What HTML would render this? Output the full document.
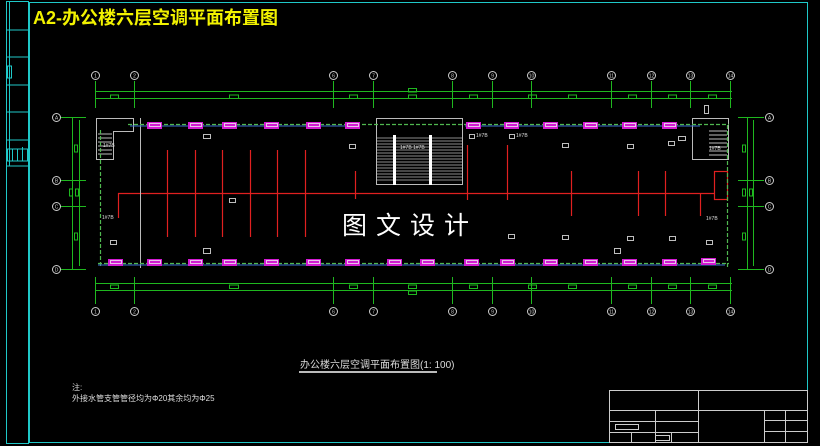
<!DOCTYPE html>
<html><head><meta charset="utf-8"><style>
html,body{margin:0;padding:0;background:#000;width:820px;height:446px;overflow:hidden}
svg{display:block}
text{font-family:"Liberation Sans","Noto Sans CJK SC",sans-serif}
</style></head><body>
<svg width="820" height="446" viewBox="0 0 820 446" xmlns="http://www.w3.org/2000/svg">
<rect width="820" height="446" fill="#000"/>
<g stroke="#1fc8c8" stroke-width="1" fill="none">
<rect x="6.5" y="1.5" width="22" height="442"/>
<line x1="9.5" y1="2" x2="9.5" y2="166"/>
<line x1="6" y1="30" x2="28" y2="30"/><line x1="6" y1="57" x2="28" y2="57"/>
<line x1="6" y1="85" x2="28" y2="85"/><line x1="6" y1="112" x2="28" y2="112"/>
<line x1="6" y1="140" x2="28" y2="140"/><line x1="6" y1="166" x2="28" y2="166"/>
<rect x="7.5" y="66" width="4" height="12"/>
<rect x="7.5" y="149" width="20" height="12"/>
<line x1="12.5" y1="149" x2="12.5" y2="161"/><line x1="17.5" y1="149" x2="17.5" y2="161"/><line x1="22.5" y1="147" x2="22.5" y2="161"/>
<rect x="29.5" y="2.5" width="778" height="440"/>
</g>
<text x="33" y="24" fill="#f2f200" font-size="18" font-weight="bold" font-family="'Liberation Serif','Noto Serif CJK SC',serif">A2-办公楼六层空调平面布置图</text>

<g stroke="#1fb81f" stroke-width="1" fill="none">
<line x1="96" y1="91.5" x2="732" y2="91.5"/><line x1="96" y1="98.5" x2="732" y2="98.5"/>
<line x1="96" y1="283.5" x2="732" y2="283.5"/><line x1="96" y1="290.5" x2="732" y2="290.5"/>
<g id="tv">
<line x1="95.5" y1="81" x2="95.5" y2="108"/><line x1="134.5" y1="81" x2="134.5" y2="108"/>
<line x1="333.5" y1="81" x2="333.5" y2="108"/><line x1="373.5" y1="81" x2="373.5" y2="108"/>
<line x1="452.5" y1="81" x2="452.5" y2="108"/><line x1="492.5" y1="81" x2="492.5" y2="108"/>
<line x1="531.5" y1="81" x2="531.5" y2="108"/><line x1="611.5" y1="81" x2="611.5" y2="108"/>
<line x1="651.5" y1="81" x2="651.5" y2="108"/><line x1="690.5" y1="81" x2="690.5" y2="108"/>
<line x1="730.5" y1="81" x2="730.5" y2="108"/>
</g>
<use href="#tv" transform="translate(0,196)"/>
<rect x="110.5" y="95" width="8" height="3.5"/><rect x="229.5" y="95" width="9" height="3.5"/><rect x="349.5" y="95" width="8" height="3.5"/>
<rect x="408.5" y="88.5" width="8" height="3.5"/><rect x="408.5" y="95" width="8" height="3.5"/>
<rect x="469.5" y="95" width="8" height="3.5"/><rect x="528.5" y="95" width="8" height="3.5"/><rect x="568.5" y="95" width="8" height="3.5"/><rect x="628.5" y="95" width="8" height="3.5"/><rect x="668.5" y="95" width="8" height="3.5"/><rect x="708.5" y="95" width="8" height="3.5"/>
<rect x="110.5" y="285" width="8" height="3.5"/><rect x="229.5" y="285" width="9" height="3.5"/><rect x="349.5" y="285" width="8" height="3.5"/>
<rect x="408.5" y="285" width="8" height="3.5"/><rect x="408.5" y="291" width="8" height="3.5"/>
<rect x="469.5" y="285" width="8" height="3.5"/><rect x="528.5" y="285" width="8" height="3.5"/><rect x="568.5" y="285" width="8" height="3.5"/><rect x="628.5" y="285" width="8" height="3.5"/><rect x="668.5" y="285" width="8" height="3.5"/><rect x="708.5" y="285" width="8" height="3.5"/>
<line x1="60" y1="117.5" x2="86" y2="117.5"/><line x1="60" y1="180.5" x2="86" y2="180.5"/><line x1="60" y1="206.5" x2="86" y2="206.5"/><line x1="60" y1="269.5" x2="86" y2="269.5"/>
<line x1="72.5" y1="117" x2="72.5" y2="269"/><line x1="79.5" y1="120" x2="79.5" y2="266"/>
<rect x="74.5" y="145" width="3" height="7"/><rect x="69.5" y="189" width="3" height="7"/><rect x="75.5" y="189" width="3" height="7"/><rect x="74.5" y="233" width="3" height="7"/>
<line x1="738" y1="117.5" x2="764" y2="117.5"/><line x1="738" y1="180.5" x2="764" y2="180.5"/><line x1="738" y1="206.5" x2="764" y2="206.5"/><line x1="738" y1="269.5" x2="764" y2="269.5"/>
<line x1="747.5" y1="117" x2="747.5" y2="269"/><line x1="753.5" y1="120" x2="753.5" y2="266"/>
<rect x="742.5" y="145" width="3" height="7"/><rect x="742.5" y="189" width="3" height="7"/><rect x="749.5" y="189" width="3" height="7"/><rect x="742.5" y="233" width="3" height="7"/>
</g>
<g fill="none" stroke="#ccc" stroke-width="1">
<circle cx="95.5" cy="75.5" r="4"/><circle cx="134.5" cy="75.5" r="4"/><circle cx="333.5" cy="75.5" r="4"/><circle cx="373.5" cy="75.5" r="4"/><circle cx="452.5" cy="75.5" r="4"/><circle cx="492.5" cy="75.5" r="4"/><circle cx="531.5" cy="75.5" r="4"/><circle cx="611.5" cy="75.5" r="4"/><circle cx="651.5" cy="75.5" r="4"/><circle cx="690.5" cy="75.5" r="4"/><circle cx="730.5" cy="75.5" r="4"/>
<circle cx="95.5" cy="311.5" r="4"/><circle cx="134.5" cy="311.5" r="4"/><circle cx="333.5" cy="311.5" r="4"/><circle cx="373.5" cy="311.5" r="4"/><circle cx="452.5" cy="311.5" r="4"/><circle cx="492.5" cy="311.5" r="4"/><circle cx="531.5" cy="311.5" r="4"/><circle cx="611.5" cy="311.5" r="4"/><circle cx="651.5" cy="311.5" r="4"/><circle cx="690.5" cy="311.5" r="4"/><circle cx="730.5" cy="311.5" r="4"/>
<circle cx="56.5" cy="117.5" r="4"/><circle cx="56.5" cy="180.5" r="4"/><circle cx="56.5" cy="206.5" r="4"/><circle cx="56.5" cy="269.5" r="4"/>
<circle cx="769.5" cy="117.5" r="4"/><circle cx="769.5" cy="180.5" r="4"/><circle cx="769.5" cy="206.5" r="4"/><circle cx="769.5" cy="269.5" r="4"/>
</g>
<g fill="#ccc" font-size="5" text-anchor="middle">
<text x="95.5" y="77.5">1</text><text x="134.5" y="77.5">2</text><text x="333.5" y="77.5">6</text><text x="373.5" y="77.5">7</text><text x="452.5" y="77.5">8</text><text x="492.5" y="77.5">9</text><text x="531.5" y="77.5">10</text><text x="611.5" y="77.5">11</text><text x="651.5" y="77.5">12</text><text x="690.5" y="77.5">13</text><text x="730.5" y="77.5">14</text>
<text x="95.5" y="313.5">1</text><text x="134.5" y="313.5">2</text><text x="333.5" y="313.5">6</text><text x="373.5" y="313.5">7</text><text x="452.5" y="313.5">8</text><text x="492.5" y="313.5">9</text><text x="531.5" y="313.5">10</text><text x="611.5" y="313.5">11</text><text x="651.5" y="313.5">12</text><text x="690.5" y="313.5">13</text><text x="730.5" y="313.5">14</text>
<text x="56.5" y="119.5">A</text><text x="56.5" y="182.5">B</text><text x="56.5" y="208.5">C</text><text x="56.5" y="271.5">D</text>
<text x="769.5" y="119.5">A</text><text x="769.5" y="182.5">B</text><text x="769.5" y="208.5">C</text><text x="769.5" y="271.5">D</text>
</g>
<g stroke="#e02020" stroke-width="1.2" fill="none">
<line x1="118" y1="193.5" x2="714" y2="193.5"/>
<line x1="118.5" y1="193" x2="118.5" y2="218"/>
<line x1="167.5" y1="150" x2="167.5" y2="237"/><line x1="195.5" y1="150" x2="195.5" y2="237"/><line x1="222.5" y1="150" x2="222.5" y2="237"/><line x1="250.5" y1="150" x2="250.5" y2="237"/><line x1="277.5" y1="150" x2="277.5" y2="237"/><line x1="305.5" y1="150" x2="305.5" y2="237"/>
<line x1="355.5" y1="171" x2="355.5" y2="199"/>
<line x1="467.5" y1="145" x2="467.5" y2="200"/>
<line x1="507.5" y1="145" x2="507.5" y2="200"/>
<line x1="571.5" y1="171" x2="571.5" y2="216"/>
<line x1="638.5" y1="171" x2="638.5" y2="216"/>
<line x1="665.5" y1="171" x2="665.5" y2="216"/>
<line x1="700.5" y1="193" x2="700.5" y2="216"/>
<rect x="714.5" y="171.5" width="13" height="28"/>
</g>
<g stroke="#bbb" fill="none" stroke-width="1">
<path d="M96.5 118.5 H133.5 V131.5 H113.5 V159.5 H96.5 Z"/>
<line x1="140.5" y1="118" x2="140.5" y2="268"/>
<rect x="376.5" y="118.5" width="86" height="66"/>
<path d="M692.5 118.5 H728.5 V159.5 H692.5 Z"/>
<line x1="98" y1="134" x2="112" y2="134"/><line x1="98" y1="138" x2="112" y2="138"/><line x1="98" y1="142" x2="112" y2="142"/><line x1="98" y1="146" x2="112" y2="146"/><line x1="98" y1="150" x2="112" y2="150"/><line x1="98" y1="154" x2="112" y2="154"/>
<line x1="709" y1="131" x2="727" y2="131"/><line x1="709" y1="135" x2="727" y2="135"/><line x1="709" y1="139" x2="727" y2="139"/><line x1="709" y1="143" x2="727" y2="143"/><line x1="709" y1="147" x2="727" y2="147"/><line x1="709" y1="151" x2="727" y2="151"/><line x1="709" y1="155" x2="727" y2="155"/>
</g>
<g stroke="#bbb" stroke-width="0.8">
<line x1="377" y1="138" x2="462" y2="138"/><line x1="377" y1="141" x2="462" y2="141"/><line x1="377" y1="144" x2="462" y2="144"/><line x1="377" y1="147" x2="462" y2="147"/><line x1="377" y1="150" x2="462" y2="150"/><line x1="377" y1="153" x2="462" y2="153"/><line x1="377" y1="156" x2="462" y2="156"/><line x1="377" y1="159" x2="462" y2="159"/><line x1="377" y1="162" x2="462" y2="162"/><line x1="377" y1="165" x2="462" y2="165"/><line x1="377" y1="168" x2="462" y2="168"/><line x1="377" y1="171" x2="462" y2="171"/><line x1="377" y1="174" x2="462" y2="174"/><line x1="377" y1="177" x2="462" y2="177"/><line x1="377" y1="180" x2="462" y2="180"/>
</g>
<rect x="393" y="135" width="3" height="50" fill="#fff"/><rect x="429" y="135" width="3" height="50" fill="#fff"/>
<g stroke="#4fb84f" stroke-width="1.2" stroke-dasharray="4 2">
<line x1="128" y1="124.5" x2="729" y2="124.5"/>
<line x1="98" y1="263.5" x2="729" y2="263.5"/>
<line x1="100.5" y1="130" x2="100.5" y2="268"/>
<line x1="727.5" y1="125" x2="727.5" y2="268"/>
</g>
<g stroke="#3b6fd0" stroke-width="1">
<line x1="130" y1="126" x2="360" y2="126"/><line x1="465" y1="126" x2="700" y2="126"/>
<line x1="98" y1="265" x2="725" y2="265"/>
</g>
<g fill="#d21bd2">
<rect x="147" y="122" width="15" height="7"/><rect x="188" y="122" width="15" height="7"/><rect x="222" y="122" width="15" height="7"/><rect x="264" y="122" width="15" height="7"/><rect x="306" y="122" width="15" height="7"/><rect x="345" y="122" width="15" height="7"/>
<rect x="466" y="122" width="15" height="7"/><rect x="504" y="122" width="15" height="7"/><rect x="543" y="122" width="15" height="7"/><rect x="583" y="122" width="15" height="7"/><rect x="622" y="122" width="15" height="7"/><rect x="662" y="122" width="15" height="7"/>
<rect x="108" y="259" width="15" height="7"/><rect x="147" y="259" width="15" height="7"/><rect x="188" y="259" width="15" height="7"/><rect x="222" y="259" width="15" height="7"/><rect x="264" y="259" width="15" height="7"/><rect x="306" y="259" width="15" height="7"/><rect x="345" y="259" width="15" height="7"/>
<rect x="387" y="259" width="15" height="7"/><rect x="420" y="259" width="15" height="7"/><rect x="464" y="259" width="15" height="7"/><rect x="500" y="259" width="15" height="7"/><rect x="543" y="259" width="15" height="7"/><rect x="583" y="259" width="15" height="7"/><rect x="622" y="259" width="15" height="7"/><rect x="662" y="259" width="15" height="7"/><rect x="701" y="258" width="15" height="7"/>
</g>
<g fill="none" stroke="#eee" stroke-width="0.8">
<rect x="149.5" y="123.5" width="11" height="3"/><rect x="190.5" y="123.5" width="11" height="3"/><rect x="224.5" y="123.5" width="11" height="3"/><rect x="266.5" y="123.5" width="11" height="3"/><rect x="308.5" y="123.5" width="11" height="3"/><rect x="347.5" y="123.5" width="11" height="3"/>
<rect x="468.5" y="123.5" width="11" height="3"/><rect x="506.5" y="123.5" width="11" height="3"/><rect x="545.5" y="123.5" width="11" height="3"/><rect x="585.5" y="123.5" width="11" height="3"/><rect x="624.5" y="123.5" width="11" height="3"/><rect x="664.5" y="123.5" width="11" height="3"/>
<rect x="110.5" y="260.5" width="11" height="3"/><rect x="149.5" y="260.5" width="11" height="3"/><rect x="190.5" y="260.5" width="11" height="3"/><rect x="224.5" y="260.5" width="11" height="3"/><rect x="266.5" y="260.5" width="11" height="3"/><rect x="308.5" y="260.5" width="11" height="3"/><rect x="347.5" y="260.5" width="11" height="3"/>
<rect x="389.5" y="260.5" width="11" height="3"/><rect x="422.5" y="260.5" width="11" height="3"/><rect x="466.5" y="260.5" width="11" height="3"/><rect x="502.5" y="260.5" width="11" height="3"/><rect x="545.5" y="260.5" width="11" height="3"/><rect x="585.5" y="260.5" width="11" height="3"/><rect x="624.5" y="260.5" width="11" height="3"/><rect x="664.5" y="260.5" width="11" height="3"/><rect x="703.5" y="259.5" width="11" height="3"/>
<rect x="203.5" y="134.5" width="7" height="4"/><rect x="229.5" y="198.5" width="6" height="4"/><rect x="110.5" y="240.5" width="6" height="4"/><rect x="203.5" y="248.5" width="7" height="5"/>
<rect x="349.5" y="144.5" width="6" height="4"/><rect x="469.5" y="134.5" width="5" height="4"/><rect x="509.5" y="134.5" width="5" height="4"/>
<rect x="562.5" y="143.5" width="6" height="4"/><rect x="627.5" y="144.5" width="6" height="4"/><rect x="668.5" y="141.5" width="6" height="4"/><rect x="678.5" y="136.5" width="7" height="4"/>
<rect x="508.5" y="234.5" width="6" height="4"/><rect x="562.5" y="235.5" width="6" height="4"/><rect x="627.5" y="236.5" width="6" height="4"/><rect x="669.5" y="236.5" width="6" height="4"/><rect x="706.5" y="240.5" width="6" height="4"/>
<rect x="614.5" y="248.5" width="6" height="5"/><rect x="704.5" y="105.5" width="4" height="8"/>
</g>
<g fill="#ddd" font-size="5">
<text x="102" y="219">1#7B</text><text x="103" y="147">1#7B</text><text x="476" y="137">1#7B</text><text x="516" y="137">1#7B</text><text x="706" y="220">1#7B</text><text x="709" y="150">1#7B</text>
<text x="400" y="149">1#7B 1#7B</text>
</g>
<text x="342" y="234" fill="#fff" font-size="25" font-family="'Noto Serif CJK SC','Liberation Serif',serif" letter-spacing="9">图文设计</text>
<text x="300" y="368" fill="#ddd" font-size="10">办公楼六层空调平面布置图(1: 100)</text>
<line x1="299" y1="372" x2="437" y2="372" stroke="#bbb" stroke-width="2"/>
<text x="72" y="390" fill="#ddd" font-size="8">注:</text>
<text x="72" y="401" fill="#ddd" font-size="8">外接水管支管管径均为Φ20其余均为Φ25</text>
<g fill="none" stroke="#ccc" stroke-width="1">
<rect x="609.5" y="390.5" width="198" height="52"/>
<line x1="610" y1="410.5" x2="808" y2="410.5"/>
<line x1="698.5" y1="391" x2="698.5" y2="443"/>
<line x1="610" y1="421.5" x2="698" y2="421.5"/><line x1="610" y1="432.5" x2="698" y2="432.5"/>
<line x1="655.5" y1="411" x2="655.5" y2="443"/>
<line x1="764.5" y1="410" x2="764.5" y2="443"/><line x1="785.5" y1="410" x2="785.5" y2="443"/>
<line x1="764" y1="420.5" x2="808" y2="420.5"/><line x1="764" y1="431.5" x2="808" y2="431.5"/>
<line x1="631.5" y1="432" x2="631.5" y2="443"/><line x1="671.5" y1="432" x2="671.5" y2="443"/>
<rect x="615.5" y="424.5" width="23" height="5"/><rect x="655.5" y="435.5" width="14" height="5"/>
</g>
</svg>
</body></html>
